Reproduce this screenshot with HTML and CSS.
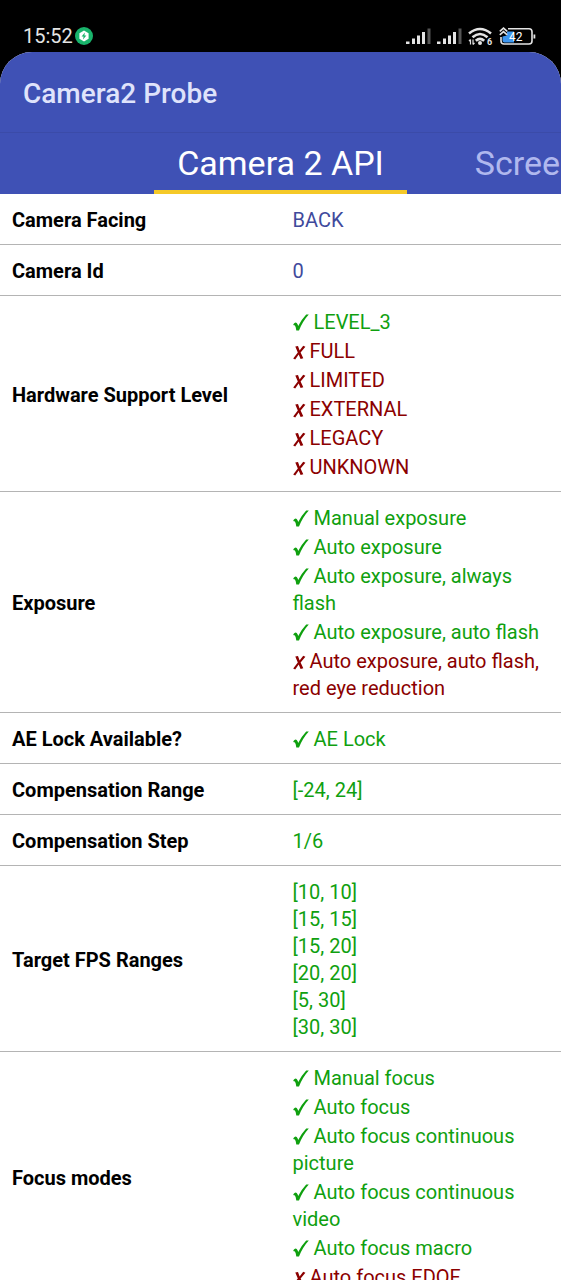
FILE: index.html
```html
<!DOCTYPE html>
<html lang="en">
<head>
    <meta charset="UTF-8">
    <meta name="viewport" content="width=device-width, initial-scale=1.0">
    <title>Camera2 Probe</title>
    <link rel="stylesheet" href="styles.css">
</head>
<body>
    <svg class="symbols" aria-hidden="true">
        <symbol id="check" viewBox="0 0 16 17">
            <path d="M0.300 10.200Q2.200 7.800 3.700 9Q4.700 10 5.200 12Q8.500 5.500 13.200 0.500H15.800Q9.800 7 6 16.400H3.300Q2.800 12.700 1.900 11.600Q1.300 11 0.600 11.300z"/>
        </symbol>
        <symbol id="cross" viewBox="0 0 13 17">
            <path d="M2.300 3.500L5 2.900L6.600 7.400L10.200 2.700L12.400 3.700L7.600 9.400L10.300 15.200L7.600 15.900L5.700 11.500L2.200 16.400L0.200 15.400L4.800 9.400z"/>
        </symbol>
    </svg>

    <div class="screen">
        <div class="status-bar">
            <div class="status-left">
                <span>15:52</span>
                <svg class="icon-badge" viewBox="0 0 18 18" aria-hidden="true">
                    <circle cx="9" cy="9" r="9" fill="#19b36b"/>
                    <path d="M9 3.600l4.600 2.700v5.400L9 14.400l-4.600-2.700V6.300z" fill="#fff"/>
                    <path d="M9.900 5.400L6.600 9.600h2l-.6 3 3.400-4.200h-2z" fill="#19b36b"/>
                </svg>
            </div>
            <div class="status-right">
                <svg class="icon-signal" viewBox="0 0 25 17" aria-hidden="true">
                    <path d="M0 13.500h3.500V16H0zM6 10.500h3V16H6zM11 7.500h3V16h-3zM16 4h3v12h-3z" fill="#e4e4e4"/>
                    <path d="M21.500 0.500h3V16h-3z" fill="#555"/>
                </svg>
                <svg class="icon-signal" viewBox="0 0 25 17" aria-hidden="true">
                    <path d="M0 13.500h3.500V16H0zM6 10.500h3V16H6zM11 7.500h3V16h-3zM16 4h3v12h-3z" fill="#e4e4e4"/>
                    <path d="M21.500 0.500h3V16h-3z" fill="#555"/>
                </svg>
                <svg class="icon-wifi" viewBox="0 0 25 19" aria-hidden="true">
                    <g fill="none" stroke="#e4e4e4" stroke-width="2.600">
                        <path d="M1 6.500Q12 -2.500 23 6.500"/>
                        <path d="M4.500 10.200Q12 3.800 19.500 10.200"/>
                        <path d="M7.800 13.800Q12 10 16.200 13.800"/>
                    </g>
                    <circle cx="12" cy="16" r="2" fill="#e4e4e4"/>
                    <path d="M2.500 12.500v5M1 14.200l1.500-1.700M5 17.500v-5M5 17.500l1.500-1.700" fill="none" stroke="#e4e4e4" stroke-width="1.200"/>
                    <text x="19" y="18" class="wifi-gen">6</text>
                </svg>
                <svg class="icon-battery" viewBox="0 0 37 19" aria-hidden="true">
                    <path d="M3.500 9.500L8 8.500V4.500h7V15.500H5.500Q3.500 15.500 3.500 13.500z" fill="#3d96f0"/>
                    <path d="M9 1.800H30Q33 1.800 33 4.800v9.200Q33 17 30 17H5Q2 17 2 14V10" fill="none" stroke="#e4e4e4" stroke-width="1.600"/>
                    <path d="M34.500 7.500h1.800v4h-1.800z" fill="#e4e4e4"/>
                    <path d="M.8 4.300L4.500 1.200l3.700 3.100M.8 7.800l3.700-3.100 3.700 3.100" fill="none" stroke="#e4e4e4" stroke-width="1.700"/>
                    <text x="10" y="14" class="battery-level">42</text>
                </svg>
            </div>
        </div>

        <div class="app">
            <header class="app-bar">
                <h1>Camera2 Probe</h1>
            </header>
            <nav class="tabs">
                <a href="#camera2" class="tab active">Camera 2 API</a>
                <a href="#screen" class="tab next">Scree</a>
            </nav>

            <table class="probe" id="camera2">
                <tr>
                    <th scope="row">Camera Facing</th>
                    <td>BACK</td>
                </tr>
                <tr>
                    <th scope="row">Camera Id</th>
                    <td>0</td>
                </tr>
                <tr>
                    <th scope="row">Hardware Support Level</th>
                    <td>
                        <ul class="checks">
                            <li class="yes"><svg class="mark"><use href="#check"/></svg>LEVEL_3</li>
                            <li class="no"><svg class="mark"><use href="#cross"/></svg>FULL</li>
                            <li class="no"><svg class="mark"><use href="#cross"/></svg>LIMITED</li>
                            <li class="no"><svg class="mark"><use href="#cross"/></svg>EXTERNAL</li>
                            <li class="no"><svg class="mark"><use href="#cross"/></svg>LEGACY</li>
                            <li class="no"><svg class="mark"><use href="#cross"/></svg>UNKNOWN</li>
                        </ul>
                    </td>
                </tr>
                <tr>
                    <th scope="row">Exposure</th>
                    <td>
                        <ul class="checks">
                            <li class="yes"><svg class="mark"><use href="#check"/></svg>Manual exposure</li>
                            <li class="yes"><svg class="mark"><use href="#check"/></svg>Auto exposure</li>
                            <li class="yes"><svg class="mark"><use href="#check"/></svg>Auto exposure, always flash</li>
                            <li class="yes"><svg class="mark"><use href="#check"/></svg>Auto exposure, auto flash</li>
                            <li class="no"><svg class="mark"><use href="#cross"/></svg>Auto exposure, auto flash, red eye reduction</li>
                        </ul>
                    </td>
                </tr>
                <tr>
                    <th scope="row">AE Lock Available?</th>
                    <td>
                        <ul class="checks">
                            <li class="yes"><svg class="mark"><use href="#check"/></svg>AE Lock</li>
                        </ul>
                    </td>
                </tr>
                <tr>
                    <th scope="row">Compensation Range</th>
                    <td class="value">[-24, 24]</td>
                </tr>
                <tr>
                    <th scope="row">Compensation Step</th>
                    <td class="value">1/6</td>
                </tr>
                <tr>
                    <th scope="row">Target FPS Ranges</th>
                    <td class="value">
                        <ul>
                            <li>[10, 10]</li>
                            <li>[15, 15]</li>
                            <li>[15, 20]</li>
                            <li>[20, 20]</li>
                            <li>[5, 30]</li>
                            <li>[30, 30]</li>
                        </ul>
                    </td>
                </tr>
                <tr>
                    <th scope="row">Focus modes</th>
                    <td>
                        <ul class="checks">
                            <li class="yes"><svg class="mark"><use href="#check"/></svg>Manual focus</li>
                            <li class="yes"><svg class="mark"><use href="#check"/></svg>Auto focus</li>
                            <li class="yes"><svg class="mark"><use href="#check"/></svg>Auto focus continuous picture</li>
                            <li class="yes"><svg class="mark"><use href="#check"/></svg>Auto focus continuous video</li>
                            <li class="yes"><svg class="mark"><use href="#check"/></svg>Auto focus macro</li>
                            <li class="no"><svg class="mark"><use href="#cross"/></svg>Auto focus EDOF</li>
                        </ul>
                    </td>
                </tr>
            </table>
        </div>
    </div>
</body>
</html>
```
FILE: styles.css
```css
* {
    box-sizing: border-box;
}
body {
    margin: 0;
    background: #000;
    font-family: Roboto, "Liberation Sans", sans-serif;
}
.symbols {
    display: none;
}
.screen {
    display: flex;
    flex-direction: column;
    height: 100vh;
    overflow: hidden;
}

/* status bar */
.status-bar {
    display: flex;
    justify-content: space-between;
    padding: 20px 25px 0 23px;
    flex: none;
    color: #e4e4e4;
    font-size: 20px;
    line-height: 32px;
}
.status-left,
.status-right {
    display: flex;
    align-items: center;
    height: 32px;
}
.status-left {
    gap: 2px;
}
.status-right {
    gap: 6px;
}
.icon-badge {
    width: 18px;
    height: 18px;
}
.icon-signal {
    width: 25px;
    height: 17px;
}
.icon-wifi {
    width: 25px;
    height: 19px;
}
.icon-battery {
    width: 37px;
    height: 19px;
}
.wifi-gen {
    font-size: 9px;
    font-weight: 700;
    fill: #e4e4e4;
}
.battery-level {
    font-size: 12px;
    fill: #fff;
}

/* app header */
.app {
    flex: 1;
    min-height: 0;
    overflow: hidden;
    background: #fff;
    border-radius: 32px 32px 0 0;
}
.app-bar {
    padding: 23px 23px 19px;
    background: #3f51b5;
    border-bottom: 1px solid #3b4ba8;
}
h1 {
    margin: 0;
    color: #dfe3fb;
    font-size: 28px;
    font-weight: 500;
    line-height: 38px;
}
.tabs {
    display: grid;
    grid-template-columns: 1fr auto 1fr;
    background: #3f51b5;
    overflow: hidden;
}
.tab {
    padding: 3px 23px 0;
    color: #fff;
    font-size: 34px;
    line-height: 54px;
    text-decoration: none;
    white-space: nowrap;
}
.tab.active {
    grid-column: 2;
    border-bottom: 4px solid #f5c928;
}
.tab.next {
    min-width: 0;
    padding: 3px 0 0 68px;
    color: #b0b8ee;
}

/* camera properties */
.probe {
    width: 100%;
    border-collapse: collapse;
    table-layout: fixed;
    font-size: 20px;
    line-height: 27px;
}
.probe th,
.probe td {
    width: 50%;
    padding: 13px 12px 10px;
    border-bottom: 1px solid #b4b4b4;
    text-align: left;
    vertical-align: middle;
}
.probe th {
    color: #000;
    font-weight: 700;
}
.probe td {
    color: #3f4a9c;
}
.probe ul {
    margin: 0;
    padding: 0;
    list-style: none;
}
.checks li + li {
    margin-top: 2px;
}
.probe .yes,
.probe .value {
    color: #0fa00f;
}
.probe .no {
    color: #8b0000;
}
.mark {
    width: 16px;
    height: 17px;
    margin-right: 5px;
    fill: currentColor;
    vertical-align: -2px;
}
.no .mark {
    width: 13px;
    margin-right: 4px;
}
```
